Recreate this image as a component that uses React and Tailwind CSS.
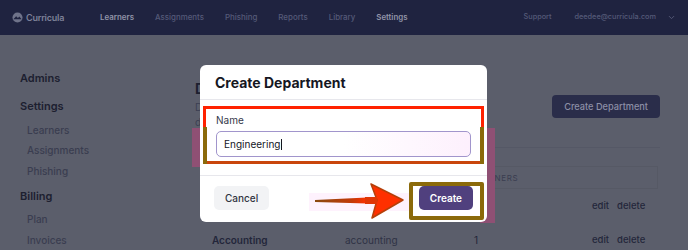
import { ChevronDown } from 'lucide-react';

const navLinks = ['Learners', 'Assignments', 'Phishing', 'Reports', 'Library', 'Settings'];

function Logo() {
  return (
    <div className="flex items-center gap-[3px] text-[#7d8198]">
      <svg width="11" height="11" viewBox="0 0 12 12">
        <circle cx="6" cy="6" r="5.5" fill="#6f738a" />
        <path d="M1.5 8 L4.5 4.5 L6.5 6.5 L8 5 L10.5 8 Z" fill="#1f2340" />
      </svg>
      <span className="text-[9px] font-semibold tracking-tight">Curricula</span>
    </div>
  );
}

function Row({ name, slug, count }) {
  return (
    <div className="h-[34px] flex items-center text-[10px] text-[#23263a]">
      <span className="w-[145px] shrink-0 pl-[12px] font-semibold">{name}</span>
      <span className="w-[129px] shrink-0 text-[#2f3245]">{slug}</span>
      <span className="w-[118px] shrink-0">{count}</span>
      <span className="ml-auto pr-[13px] flex gap-[8px] text-[9.5px] font-medium"><span>edit</span><span>delete</span></span>
    </div>
  );
}

export default function App() {
  return (
    <div className="relative w-[688px] h-[250px] overflow-hidden bg-[#5b5e6b] font-['Inter','Liberation_Sans',sans-serif]">
      {/* top nav */}
      <div className="h-[35px] bg-[#1f2340] flex items-center pl-[12px] pr-[12px]">
        <Logo />
        <div className="flex items-center gap-[21px] ml-[36px] text-[7.9px]">
          {navLinks.map(l => (
            <span
              key={l}
              className={l === 'Learners' || l === 'Settings' ? 'font-semibold text-[#9194a8]' : 'font-medium text-[#555a78]'}
            >
              {l}
            </span>
          ))}
        </div>
        <div className="ml-auto flex items-center text-[7.3px] font-medium text-[#555a78]">
          <span>Support</span>
          <span className="ml-[23px]">deedee@curricula.com</span>
          <ChevronDown className="ml-[11px] text-[#555a78]" size={9} strokeWidth={2.5} />
        </div>
      </div>

      {/* dimmed page */}
      <div className="flex">
        <div className="w-[195px] shrink-0 pl-[20px] pt-[36px] text-[#1d2030]">
          <div className="text-[11px] font-semibold leading-[14px]">Admins</div>
          <div className="text-[11px] font-semibold leading-[14px] mt-[14px]">Settings</div>
          <div className="pl-[7px] text-[10px] font-medium text-[#3a3d50] leading-[14px]">
            <div className="mt-[10px]">Learners</div>
            <div className="mt-[6px]">Assignments</div>
            <div className="mt-[7px]">Phishing</div>
          </div>
          <div className="text-[11px] font-semibold leading-[14px] mt-[11px]">Billing</div>
          <div className="pl-[7px] text-[10px] font-medium text-[#3a3d50] leading-[14px]">
            <div className="mt-[9px]">Plan</div>
            <div className="mt-[7px]">Invoices</div>
          </div>
        </div>

        <div className="flex-1 min-w-0 pr-[28px]">
          <div className="flex items-start justify-between pt-[46px]">
            <div className="min-w-0 overflow-hidden">
              <div className="text-[14px] font-bold text-[#1d2030] leading-[16px]">Departments</div>
              <div className="mt-[3px] text-[10px] text-[#3c3f52] leading-[15px] whitespace-nowrap">
                <div>Departments group learners in your organization. Create</div>
                <div>departments to organize your learners for training</div>
              </div>
            </div>
            <div className="shrink-0 mt-[14px] h-[23px] px-[12px] rounded-[4px] bg-[#2a2d4a] text-[#8c8fa6] text-[9.2px] font-medium flex items-center">
              Create Department
            </div>
          </div>

          <div className="mt-[17px] border-t border-[#555866]" />
          <div className="ml-[5px] mr-[2px] mt-[18px]">
            <div className="h-[23px] flex items-center border border-[#565965] text-[8px] tracking-[0.08em] uppercase text-[#3a3d50]">
              <span className="w-[138px] shrink-0 pl-[12px]">Name</span>
              <span className="w-[133px] shrink-0">Slug</span>
              <span>Learners</span>
            </div>
            <Row name="Engineering" slug="engineering" count="4" />
            <Row name="Accounting" slug="accounting" count="1" />
          </div>
        </div>
      </div>

      {/* pink glow behind modal (annotation) */}
      <div className="absolute left-[192px] top-[128px] w-[303px] h-[39px] bg-[#8f5074]" />
      <div className="absolute left-[480px] top-[128px] w-[15px] h-[95px] bg-[#8f5074]" />

      {/* modal */}
      <div className="absolute left-[200px] top-[65px] w-[287px] h-[157px] bg-white rounded-[6px] overflow-hidden">
        <div className="h-[35px] px-[15px] flex items-center border-b border-[#e7e7ec]">
          <span className="text-[14px] font-bold text-[#15171f]">Create Department</span>
        </div>
        <div className="px-[3px] pt-[6px] pb-[11px]">
          <div className="relative border-[3px] border-[#ff2200] border-b-[#c9460c] px-[10px] pt-[4px] pb-[4px]">
            <div className="absolute left-[-3px] right-[-3px] top-[18px] bottom-[-3px] border-l-[4px] border-r-[4px] border-[#8b6a0a]" />
            <div className="text-[10px] text-[#34374a] leading-[14px]">Name</div>
            <div className="mt-[4px] h-[26px] rounded-[5px] border-[1.5px] border-[#a195cc] flex items-center pl-[7px] text-[10px] text-[#15171f] bg-gradient-to-r from-white via-white to-[#fdf0fd]">
              Engineering<span className="w-px h-[11px] bg-[#15171f] ml-[1px]" />
            </div>
          </div>
        </div>
        <div className="border-t border-[#e7e7ec] h-[45px] px-[14px] flex items-center justify-between">
          <div className="h-[24px] px-[11px] rounded-[5px] bg-[#f2f3f5] text-[10px] font-medium text-[#30333f] flex items-center">Cancel</div>
          <div className="h-[24px] px-[11px] rounded-[5px] bg-[#50407e] text-[10px] font-semibold text-white flex items-center">Create</div>
        </div>
      </div>

      {/* olive box around Create */}
      <div className="absolute left-[409px] top-[182px] w-[75px] h-[38px] border-[4px] border-[#8b6a0a] rounded-[2px]" />

      {/* arrow */}
      <svg className="absolute left-[305px] top-[178px]" width="106" height="46" viewBox="0 0 106 46">
        <defs>
          <linearGradient id="shaft" x1="0" x2="1" y1="0" y2="0">
            <stop offset="0" stopColor="#8a4a10" />
            <stop offset="0.7" stopColor="#c23a08" />
            <stop offset="1" stopColor="#ff3000" />
          </linearGradient>
        </defs>
        <rect x="4" y="15" width="100" height="18" fill="#fdeafb" opacity="0.6" />
        <path d="M10 22 L62 19.5 L62 25.5 L10 24 Z" fill="url(#shaft)" />
        <path d="M66 6 L98 22 L67 40 L72 22 Z" fill="#ff3000" stroke="#b5400a" strokeWidth="1.5" strokeLinejoin="round" />
        <path d="M60 19 L72 19 L72 26 L60 26 Z" fill="#e03505" />
      </svg>
    </div>
  );
}
